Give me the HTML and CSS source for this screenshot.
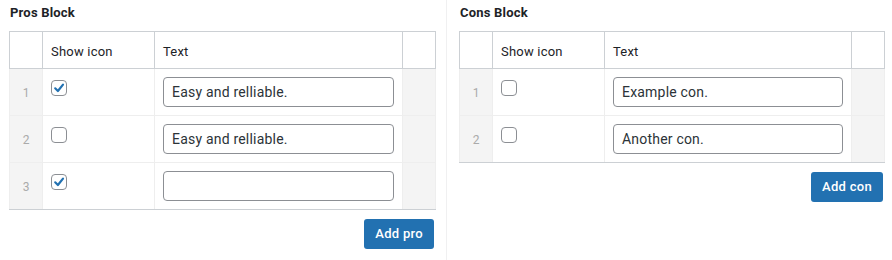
FILE: index.html
```html
<!DOCTYPE html>
<html>
<head>
<meta charset="utf-8">
<link rel="stylesheet" href="styles.css">
</head>
<body>
<div class="fields">
  <div class="field field-left">
    <div class="label">Pros Block</div>
    <table class="repeater">
      <thead>
        <tr><th class="order"></th><th class="col-icon">Show icon</th><th class="col-text">Text</th><th class="remove"></th></tr>
      </thead>
      <tbody>
        <tr>
          <td class="order">1</td>
          <td class="col-icon"><span class="cb checked"><svg viewBox="0 0 16 16" width="16" height="16"><path d="M4.2 8.3 L6.9 11 L12 4.6" fill="none" stroke="#2271b1" stroke-width="2.2" stroke-linecap="round" stroke-linejoin="round"/></svg></span></td>
          <td class="col-text"><div class="input">Easy and relliable.</div></td>
          <td class="remove"></td>
        </tr>
        <tr>
          <td class="order">2</td>
          <td class="col-icon"><span class="cb"></span></td>
          <td class="col-text"><div class="input">Easy and relliable.</div></td>
          <td class="remove"></td>
        </tr>
        <tr>
          <td class="order">3</td>
          <td class="col-icon"><span class="cb checked"><svg viewBox="0 0 16 16" width="16" height="16"><path d="M4.2 8.3 L6.9 11 L12 4.6" fill="none" stroke="#2271b1" stroke-width="2.2" stroke-linecap="round" stroke-linejoin="round"/></svg></span></td>
          <td class="col-text"><div class="input"></div></td>
          <td class="remove"></td>
        </tr>
      </tbody>
    </table>
    <div class="actions"><span class="button">Add pro</span></div>
  </div>
  <div class="field field-right">
    <div class="label">Cons Block</div>
    <table class="repeater">
      <thead>
        <tr><th class="order"></th><th class="col-icon">Show icon</th><th class="col-text">Text</th><th class="remove"></th></tr>
      </thead>
      <tbody>
        <tr>
          <td class="order">1</td>
          <td class="col-icon"><span class="cb"></span></td>
          <td class="col-text"><div class="input">Example con.</div></td>
          <td class="remove"></td>
        </tr>
        <tr>
          <td class="order">2</td>
          <td class="col-icon"><span class="cb"></span></td>
          <td class="col-text"><div class="input">Another con.</div></td>
          <td class="remove"></td>
        </tr>
      </tbody>
    </table>
    <div class="actions"><span class="button">Add con</span></div>
  </div>
</div>
</body>
</html>
```
FILE: styles.css
```css
html, body {
  margin: 0;
  padding: 0;
  background: #fff;
}
body {
  font-family: Roboto, "Liberation Sans", sans-serif;
  color: #1d2327;
  font-size: 13px;
}
.fields {
  display: flex;
  height: 260px;
}
.field {
  box-sizing: border-box;
}
.field-left {
  width: 447px;
  padding: 5px 10px 0 9px;
  border-right: 1px solid #f0f0f1;
}
.field-right {
  flex: 1;
  padding: 5px 7px 0 12px;
}
.label {
  font-weight: 700;
  font-size: 13px;
  line-height: 16px;
  letter-spacing: 0.2px;
  padding-left: 1px;
  margin-bottom: 10px;
  color: #1d2327;
}
.repeater {
  width: 100%;
  border-collapse: collapse;
  border: 1px solid #ccd0d4;
  table-layout: fixed;
}
.repeater th {
  font-weight: 400;
  text-align: left;
  height: 34px;
  padding: 2px 8px 0;
  border: 1px solid #ccd0d4;
  color: #1d2327;
  font-size: 13px;
  letter-spacing: 0.2px;
}
.repeater td {
  border: 1px solid #eeeeee;
  padding: 8px;
  vertical-align: top;
  height: 30px;
}
.repeater th.order, .repeater td.order { width: 16px; }
.repeater th.col-icon, .repeater td.col-icon { width: 95px; }
.repeater th.remove, .repeater td.remove { width: 16px; }
.repeater td.order, .repeater td.remove {
  background: #f4f4f4;
}
.repeater tbody tr:last-child td {
  border-bottom-color: #ccd0d4;
}
.repeater td.order {
  color: #aaa;
  font-size: 12px;
  text-align: center;
  vertical-align: middle;
  padding: 0;
  padding-top: 2px;
}
.cb {
  display: block;
  box-sizing: border-box;
  width: 16px;
  height: 16px;
  margin-top: 3px;
  border: 1px solid #8c8f94;
  border-radius: 4px;
  background: #fff;
  position: relative;
}
.cb svg {
  position: absolute;
  left: -1px;
  top: -1px;
}
.input {
  box-sizing: border-box;
  height: 30px;
  border: 1px solid #8c8f94;
  border-radius: 4px;
  padding: 0 8px;
  font-size: 14px;
  line-height: 28px;
  letter-spacing: 0.2px;
  color: #2c3338;
  background: #fff;
}
.actions {
  display: flex;
  justify-content: flex-end;
  padding: 9px 2px 0 0;
}
.button {
  display: inline-block;
  background: #2271b1;
  color: #fff;
  border-radius: 3px;
  height: 30px;
  line-height: 30px;
  padding: 0 11px;
  font-size: 13px;
  font-weight: 500;
  letter-spacing: 0.3px;
}
```
